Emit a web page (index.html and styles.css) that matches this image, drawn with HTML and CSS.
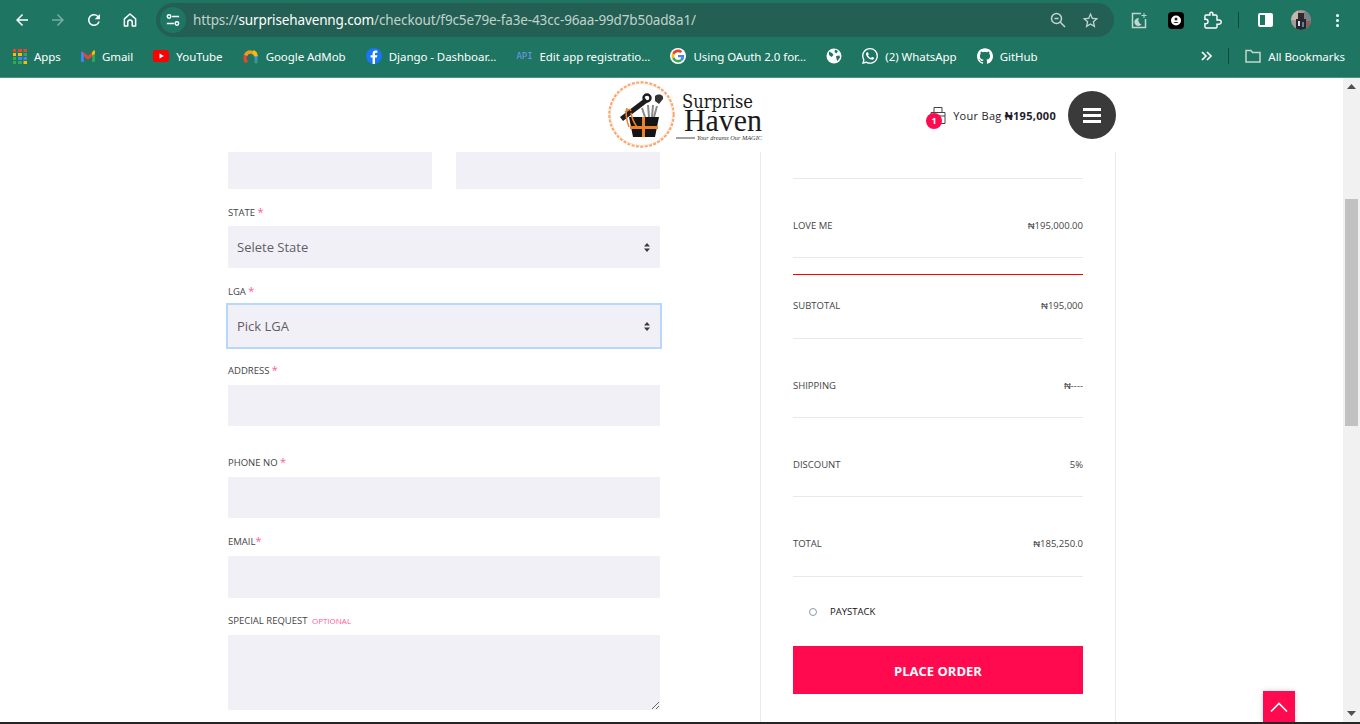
FILE: index.html
```html
<!DOCTYPE html>
<html lang="en">

<head>
  <meta charset="UTF-8">
  <title>Checkout - Surprise Haven</title>
  <link rel="stylesheet" href="styles.css">
</head>

<body>
  <div class="toolbar">
    <button class="nav-btn"><svg viewBox="0 0 24 24" width="18" height="18"><path d="M20 11H7.830l5.590-5.590L12 4l-8 8 8 8 1.410-1.410L7.830 13H20v-2z"/></svg></button>
    <button class="nav-btn nav-off"><svg viewBox="0 0 24 24" width="18" height="18"><path d="M4 11h12.170l-5.590-5.590L12 4l8 8-8 8-1.410-1.410L16.170 13H4v-2z"/></svg></button>
    <button class="nav-btn"><svg viewBox="0 0 24 24" width="18" height="18"><path d="M17.650 6.350A7.958 7.958 0 0 0 12 4c-4.420 0-7.990 3.580-7.990 8s3.570 8 7.990 8c3.730 0 6.840-2.550 7.730-6h-2.080A5.990 5.990 0 0 1 12 18c-3.310 0-6-2.690-6-6s2.690-6 6-6c1.660 0 3.140.690 4.220 1.780L13 11h7V4l-2.350 2.350z"/></svg></button>
    <button class="nav-btn"><svg viewBox="0 0 24 24" width="18" height="18"><path class="line" d="M4.500 10.500 12 4l7.500 6.500V20H15v-5a3 3 0 0 0-6 0v5H4.500z"/></svg></button>

    <div class="omnibox">
      <span class="site-info"><svg viewBox="0 0 16 16" width="14" height="14"><path class="line" d="M7 4h8M1 12h8"/><circle class="line" cx="3.500" cy="4" r="2"/><circle class="line" cx="12.500" cy="12" r="2"/></svg></span>
      <span class="url"><span class="url-dim">https://</span>surprisehavenng.com<span class="url-dim">/checkout/f9c5e79e-fa3e-43cc-96aa-99d7b50ad8a1/</span></span>
      <span class="omni-icons">
        <svg viewBox="0 0 18 18" width="18" height="18"><circle class="line-dim" cx="7.500" cy="7.500" r="5"/><path class="line-dim" d="M11.300 11.300 16 16M5.500 7.500h4"/></svg>
        <svg viewBox="0 0 24 24" width="19" height="19"><path class="dim" d="M22 9.240l-7.190-.62L12 2 9.190 8.630 2 9.240l5.460 4.730L5.820 21 12 17.270 18.180 21l-1.630-7.030L22 9.240zM12 15.400l-3.760 2.270 1-4.280-3.320-2.880 4.380-.38L12 6.100l1.710 4.040 4.380.38-3.320 2.880 1 4.280L12 15.400z"/></svg>
      </span>
    </div>

    <div class="ext-icons">
      <svg class="ext-moon" viewBox="0 0 16 17" width="16" height="17"><path class="line-dim" d="M10 1.500H1.500v14h13V7"/><path class="dim" d="M8 6a4 4 0 1 0 2.500 6.500A4.500 4.500 0 0 1 8 6z"/><path class="dim" d="M12.500 1h1v2h2v1h-2v2h-1V4h-2V3h2z"/></svg>
      <svg class="ext-black" viewBox="0 0 16 17" width="16" height="17"><rect width="16" height="17" rx="4" fill="#000"/><circle cx="8" cy="8.500" r="5" fill="#fff"/><circle cx="8" cy="7" r="1.500" fill="#222"/><path d="M5.500 11c.4-1.500 4.600-1.500 5 0z" fill="#222"/></svg>
      <svg class="ext-puzzle" viewBox="0 0 24 24" width="20" height="20"><path class="line" d="M20.500 12H18V7.500a1.500 1.500 0 0 0-1.500-1.500H13V3.500a2.500 2.500 0 0 0-3.500 0V6H5a1.500 1.500 0 0 0-1.500 1.500V11h1a2.500 2.500 0 0 1 0 5.500h-1V20A1.500 1.500 0 0 0 5 21.500h11.500A1.500 1.500 0 0 0 18 20v-3h2.500a2.500 2.500 0 0 0 0-5z"/></svg>
      <span class="divider"></span>
      <span class="panel-icon"><span></span></span>
      <svg class="avatar" viewBox="0 0 20 20" width="20" height="20">
        <rect width="20" height="20" fill="#a79a94"/>
        <rect x="0" y="0" width="7" height="10" fill="#c2b6ae"/>
        <rect x="13" y="2" width="7" height="9" fill="#7d7f88"/>
        <rect x="7" y="3" width="6" height="6" fill="#2e2a2a"/>
        <rect x="5" y="9" width="10" height="11" fill="#23262e"/>
        <rect x="7" y="11" width="2" height="5" fill="#d9dde2"/>
        <rect x="11" y="12" width="2" height="5" fill="#5f7fa6"/>
        <rect x="15" y="11" width="5" height="9" fill="#8e5d55"/>
      </svg>
      <span class="menu-dots"><i></i><i></i><i></i></span>
    </div>
  </div>

  <div class="bookmarks">
    <a class="mark"><svg width="14" height="15" viewBox="0 0 14 15"><path fill="#ea4335" d="M0 0h3v3H0zM5 0h4v3H5zM10.500 0H14v3h-3.500z"/><path fill="#fbbc05" d="M0 4h3v3H0zM5 4h4v3H5z"/><path fill="#34a853" d="M10.500 4H14v3h-3.500zM0 8h3v3H0zM0 12h3v3H0zM5 12h4v3H5z"/><path fill="#4285f4" d="M5 8h4v3H5zM10.500 8H14v3h-3.500z"/><path fill="#fbbc05" d="M10.500 12H14v3h-3.500z"/></svg>Apps</a>
    <a class="mark"><svg width="14" height="14" viewBox="0 0 14 14"><path fill="#ea4335" d="M1 2 7 6.800 12 3v4L7 10.500 1 6z"/><path fill="#fbbc05" d="M10.800 3.800 12.500 1.500a1 1 0 0 1 1.500 1V5l-2.500 2z"/><path fill="#4285f4" d="M0 2.500 2.800 4.500V13H1a1 1 0 0 1-1-1z"/><path fill="#34a853" d="M14 5v7a1 1 0 0 1-1 1h-1.800V6.500z"/></svg>Gmail</a>
    <a class="mark"><svg width="16" height="16" viewBox="0 0 16 16"><rect y="2" width="16" height="12" rx="3" fill="#f00"/><path fill="#fff" d="M6.500 5.500 11 8l-4.500 2.500z"/></svg>YouTube</a>
    <a class="mark"><svg width="16" height="16" viewBox="0 0 16 16"><path fill="none" stroke="#ea4335" stroke-width="3.400" d="M3.500 14.500C2 12 1.700 9.500 2.500 7.500"/><path fill="none" stroke="#f29a1f" stroke-width="3.400" d="M2.500 7.500a5.500 5.500 0 0 1 10.500 1"/><path fill="none" stroke="#fbbc05" stroke-width="3.400" d="M10 3.500A5.500 5.500 0 0 1 13 8.500"/><path fill="none" stroke="#4285f4" stroke-width="3" d="M13 8.500V13"/><circle cx="13" cy="14" r="1.600" fill="#34a853"/></svg>Google AdMob</a>
    <a class="mark"><svg width="16" height="16" viewBox="0 0 16 16"><circle cx="8" cy="8" r="8" fill="#1877f2"/><path fill="#fff" d="M9 16V9.500h2l.4-2.300H9V5.900c0-.7.300-1.200 1.200-1.200h1.200V2.700c-.5-.1-1.100-.2-1.800-.2-1.900 0-3 1.100-3 3.100v1.600H4.600v2.300h2V16z"/></svg>Django - Dashboar...</a>
    <a class="mark"><span class="api-badge">API</span>Edit app registratio...</a>
    <a class="mark"><svg width="16" height="16" viewBox="-6 -6 60 60"><circle cx="24" cy="24" r="30" fill="#fff"/><path fill="#EA4335" d="M24 9.500c3.540 0 6.710 1.220 9.210 3.600l6.850-6.850C35.900 2.380 30.470 0 24 0 14.620 0 6.510 5.380 2.560 13.220l7.980 6.190C12.430 13.720 17.740 9.500 24 9.500z"/><path fill="#4285F4" d="M46.980 24.550c0-1.570-.15-3.090-.38-4.550H24v9.020h12.940c-.58 2.960-2.260 5.480-4.780 7.180l7.730 6c4.510-4.180 7.090-10.360 7.090-17.650z"/><path fill="#FBBC05" d="M10.530 28.590c-.48-1.450-.76-2.990-.76-4.590s.27-3.140.76-4.590l-7.980-6.190C.92 16.460 0 20.120 0 24c0 3.880.92 7.540 2.560 10.780l7.970-6.190z"/><path fill="#34A853" d="M24 48c6.480 0 11.930-2.130 15.890-5.810l-7.730-6c-2.150 1.450-4.920 2.300-8.160 2.300-6.260 0-11.570-4.220-13.470-9.910l-7.980 6.190C6.510 42.620 14.620 48 24 48z"/></svg>Using OAuth 2.0 for...</a>
    <a class="mark"><svg width="16" height="16" viewBox="0 0 16 16"><circle cx="8" cy="8" r="7.500" fill="#fff"/><path fill="#1e7562" d="M3 3.500 6 5l1.500 2L5.500 9 3 7zM9 1.500l3 1.500-1.500 2.500L8.500 4zM10 8l3.500-.5.500 2-2.500 3.500-1-2z"/></svg></a>
    <a class="mark"><svg width="16" height="16" viewBox="0 0 24 24"><path fill="#fff" d="M17.472 14.382c-.297-.149-1.758-.867-2.030-.967-.273-.099-.471-.148-.670.150-.197.297-.767.966-.940 1.164-.173.199-.347.223-.644.075-.297-.150-1.255-.463-2.390-1.475-.883-.788-1.480-1.761-1.653-2.059-.173-.297-.018-.458.130-.606.134-.133.298-.347.446-.520.149-.174.198-.298.298-.497.099-.198.050-.371-.025-.520-.075-.149-.669-1.612-.916-2.207-.242-.579-.487-.500-.669-.510-.173-.008-.371-.010-.570-.010-.198 0-.520.074-.792.372-.272.297-1.040 1.016-1.040 2.479 0 1.462 1.065 2.875 1.213 3.074.149.198 2.096 3.200 5.077 4.487.709.306 1.262.489 1.694.625.712.227 1.360.195 1.871.118.571-.085 1.758-.719 2.006-1.413.248-.694.248-1.289.173-1.413-.074-.124-.272-.198-.570-.347m-5.421 7.403h-.004a9.870 9.870 0 0 1-5.031-1.378l-.361-.214-3.741.982.998-3.648-.235-.374a9.860 9.860 0 0 1-1.510-5.260c.001-5.450 4.436-9.884 9.888-9.884 2.640 0 5.122 1.030 6.988 2.898a9.825 9.825 0 0 1 2.893 6.994c-.003 5.450-4.437 9.884-9.885 9.884m8.413-18.297A11.815 11.815 0 0 0 12.050 0C5.495 0 .160 5.335.157 11.892c0 2.096.547 4.142 1.588 5.945L.057 24l6.305-1.654a11.882 11.882 0 0 0 5.683 1.448h.005c6.554 0 11.890-5.335 11.893-11.893a11.821 11.821 0 0 0-3.480-8.413z"/></svg>(2) WhatsApp</a>
    <a class="mark"><svg width="16" height="16" viewBox="0 0 24 24"><path fill="#fff" d="M12 .297c-6.630 0-12 5.373-12 12 0 5.303 3.438 9.800 8.205 11.385.6.113.82-.258.82-.577 0-.285-.010-1.040-.015-2.040-3.338.724-4.042-1.610-4.042-1.610C4.422 18.070 3.633 17.700 3.633 17.700c-1.087-.744.084-.729.084-.729 1.205.084 1.838 1.236 1.838 1.236 1.070 1.835 2.809 1.305 3.495.998.108-.776.417-1.305.760-1.605-2.665-.3-5.466-1.332-5.466-5.930 0-1.310.465-2.380 1.235-3.220-.135-.303-.54-1.523.105-3.176 0 0 1.005-.322 3.300 1.230.960-.267 1.980-.399 3-.405 1.020.006 2.040.138 3 .405 2.280-1.552 3.285-1.230 3.285-1.230.645 1.653.24 2.873.12 3.176.765.840 1.230 1.910 1.230 3.220 0 4.610-2.805 5.625-5.475 5.920.420.360.810 1.096.810 2.220 0 1.606-.015 2.896-.015 3.286 0 .315.210.690.825.570C20.565 22.092 24 17.592 24 12.297c0-6.627-5.373-12-12-12"/></svg>GitHub</a>
    <span class="mark-end">
      <svg width="12" height="12" viewBox="0 0 12 12"><path class="line" d="M2 2l4 4-4 4M7 2l4 4-4 4"/></svg>
      <span class="divider"></span>
      <span class="mark"><svg width="16" height="14" viewBox="0 0 16 14"><path class="line-dim" d="M1 1.500h5l1.500 2H15v9.500H1z"/></svg>All Bookmarks</span>
    </span>
  </div>

  <div class="viewport">
    <div class="page">
      <header class="site-header">
        <svg class="logo" width="170" height="74" viewBox="0 0 170 74">
          <circle cx="41.500" cy="36.500" r="32" fill="none" stroke="#f9a66c" stroke-width="2.400" stroke-dasharray="3 1.400"/>
          <circle cx="41.500" cy="36.500" r="31" fill="#fff"/>
          <circle cx="41.500" cy="36.500" r="31" fill="none" stroke="#fcd3b6" stroke-width=".8"/>
          <path d="M20 39 45 20l3 4-25 19z" fill="#1c1c1c"/>
          <circle cx="47" cy="20" r="3.500" fill="none" stroke="#1c1c1c" stroke-width="2.400"/>
          <path d="M55 18c4-3 9-1 8 3l-4 5-4-3z" fill="#333"/>
          <path d="M42 30l3 9M48 27l1 12M53 27l-1 12M57 28l-3 11" stroke="#8a8a8a" stroke-width="2"/>
          <path d="M29 39h30l-4 20H33z" fill="#141414"/>
          <path d="M30 48h28v3H30zM42 39h3v20h-3z" fill="#f07f2a"/>
          <path d="M27 30c-2 5 0 14 2 19M31 35c1 5 3 10 6 14M25 34c3-2 5-4 6-1" fill="none" stroke="#f07f2a" stroke-width="1.500"/>
          <text class="logo-top" x="82" y="30" textLength="71" lengthAdjust="spacingAndGlyphs">Surprise</text>
          <text class="logo-main" x="84" y="53" textLength="78" lengthAdjust="spacingAndGlyphs">Haven</text>
          <path d="M76 60h19" stroke="#444" stroke-width="1"/>
          <text class="logo-tag" x="97" y="62" textLength="65" lengthAdjust="spacingAndGlyphs">Your dreams Our MAGIC</text>
        </svg>
        <div class="bag">
          <span class="bag-icon">
            <svg width="16" height="18" viewBox="0 0 16 18"><path d="M1 6.500h14v11H1zM4 6.500V1.500h8v5M1 10h14" fill="none" stroke="#444" stroke-width="1"/></svg>
            <span class="bag-count">1</span>
          </span>
          <span class="bag-text">Your Bag <b>₦195,000</b></span>
        </div>
        <button class="menu-btn"><span></span><span></span><span></span></button>
      </header>

      <main class="content">
        <form class="checkout-form">
          <div class="name-row">
            <input class="input input-short" type="text">
            <input class="input input-short" type="text">
          </div>

          <div class="field field-tight">
            <label class="label">STATE <em>*</em></label>
            <div class="select">
              <span>Selete State</span>
              <svg width="6" height="9" viewBox="0 0 6 9"><path d="M3 0l3 3.500H0zM3 9 0 5.500h6z"/></svg>
            </div>
          </div>

          <div class="field field-tight">
            <label class="label">LGA <em>*</em></label>
            <div class="select select-focus">
              <span>Pick LGA</span>
              <svg width="6" height="9" viewBox="0 0 6 9"><path d="M3 0l3 3.500H0zM3 9 0 5.500h6z"/></svg>
            </div>
          </div>

          <div class="field">
            <label class="label">ADDRESS <em>*</em></label>
            <input class="input input-thin" type="text">
          </div>

          <div class="field field-wide">
            <label class="label">PHONE NO <em>*</em></label>
            <input class="input input-thin" type="text">
          </div>

          <div class="field">
            <label class="label">EMAIL<em>*</em></label>
            <input class="input" type="text">
          </div>

          <div class="field field-tight">
            <label class="label">SPECIAL REQUEST <small>OPTIONAL</small></label>
            <textarea class="input textarea"></textarea>
          </div>
        </form>

        <aside class="summary">
          <div class="summary-top"></div>
          <div class="summary-row"><span>LOVE ME</span><span>₦195,000.00</span></div>
          <div class="summary-red"></div>
          <div class="summary-row summary-first"><span>SUBTOTAL</span><span>₦195,000</span></div>
          <div class="summary-row"><span>SHIPPING</span><span>₦----</span></div>
          <div class="summary-row"><span>DISCOUNT</span><span>5%</span></div>
          <div class="summary-row summary-last"><span>TOTAL</span><span>₦185,250.0</span></div>
          <label class="pay-option"><span class="radio"></span>PAYSTACK</label>
          <button class="place-order" type="button">PLACE ORDER</button>
        </aside>
      </main>

      <a class="to-top"><svg width="18" height="10" viewBox="0 0 18 10"><path d="M1 9.500 9 1.500l8 8" fill="none" stroke="#fff" stroke-width="1.600"/></svg></a>
    </div>

    <div class="scrollbar">
      <svg class="scroll-arrow" width="9" height="5" viewBox="0 0 9 5"><path d="M4.500 0 9 5H0z"/></svg>
      <div class="scroll-track"><div class="scroll-thumb"></div></div>
      <svg class="scroll-arrow" width="9" height="5" viewBox="0 0 9 5"><path d="M0 0h9L4.500 5z"/></svg>
    </div>
  </div>
  <div class="bottom-edge"></div>
</body>

</html>
```

FILE: styles.css
```css
* {
  margin: 0;
  padding: 0;
  box-sizing: border-box;
}

html,
body {
  width: 100%;
  height: 100%;
  overflow: hidden;
}

body {
  display: flex;
  flex-direction: column;
  background: #fff;
  font-family: 'Open Sans', sans-serif;
}

/* browser chrome */

.toolbar {
  height: 38px;
  flex: none;
  display: flex;
  align-items: center;
  padding: 2px 0 0 4px;
  background: #1e7562;
}

.nav-btn {
  width: 36px;
  height: 36px;
  flex: none;
  display: flex;
  align-items: center;
  justify-content: center;
  background: transparent;
  border: 0;
}

.line {
  fill: none;
  stroke: #fff;
  stroke-width: 1.700;
}

.nav-btn svg path {
  fill: #fff;
}

.nav-btn svg path.line {
  fill: none;
  stroke-width: 2;
  stroke-linejoin: round;
}

.nav-off svg path {
  fill: #79ada0;
}

.line-dim {
  fill: none;
  stroke: #c3d5d0;
  stroke-width: 1.500;
}

.dim {
  fill: #c3d5d0;
}

.omnibox {
  width: 958px;
  height: 34px;
  margin-left: 8px;
  flex: none;
  display: flex;
  align-items: center;
  padding: 0 14px 0 4px;
  border-radius: 17px;
  background: #245f53;
}

.site-info {
  width: 26px;
  height: 26px;
  flex: none;
  display: flex;
  align-items: center;
  justify-content: center;
  border-radius: 50%;
  background: #1e7562;
}

.url {
  margin-left: 7px;
  font-family: 'Noto Sans', sans-serif;
  font-size: 13.500px;
  letter-spacing: -.13px;
  color: #fff;
  white-space: nowrap;
}

.url-dim {
  color: #c0d2cd;
}

.omni-icons {
  margin-left: auto;
  display: flex;
  align-items: center;
  gap: 14px;
}

.ext-icons {
  flex: 1;
  display: flex;
  align-items: center;
  padding-left: 17px;
}

.ext-black {
  margin-left: 21px;
}

.ext-puzzle {
  margin-left: 18px;
}

.divider {
  width: 1px;
  height: 16px;
  background: #0d4a3e;
}

.ext-icons .divider {
  margin-left: 16px;
}

.panel-icon {
  width: 15px;
  height: 14px;
  margin-left: 19px;
  border: 2px solid #fff;
  border-radius: 2px;
  background: #fff;
  display: block;
}

.panel-icon span {
  display: block;
  width: 5px;
  height: 10px;
  background: #1e7562;
}

.avatar {
  margin-left: 18px;
  border-radius: 50%;
}

.menu-dots {
  margin-left: 25px;
  display: flex;
  flex-direction: column;
  gap: 2px;
}

.menu-dots i {
  width: 3px;
  height: 3px;
  border-radius: 50%;
  background: #fff;
}

.bookmarks {
  height: 40px;
  flex: none;
  display: flex;
  align-items: center;
  gap: 20.200px;
  padding: 0 15px 3px 13px;
  background: #1e7562;
  border-bottom: 1px solid #4f917f;
  font-family: 'Noto Sans', sans-serif;
  font-size: 11.500px;
  letter-spacing: -.06px;
  color: #fff;
  white-space: nowrap;
}

.mark {
  display: flex;
  align-items: center;
  gap: 7px;
}

.api-badge {
  width: 16px;
  font-family: 'DejaVu Sans Mono', monospace;
  font-size: 9px;
  color: #6f9bec;
}

.mark-end {
  margin-left: auto;
  display: flex;
  align-items: center;
  gap: 16px;
}

/* page */

.viewport {
  flex: 1;
  min-height: 0;
  display: flex;
}

.page {
  flex: 1;
  position: relative;
  overflow: hidden;
}

.site-header {
  height: 74px;
  display: flex;
  align-items: center;
  padding: 0 227px 0 600px;
  background: #fff;
}

.logo {
  flex: none;
}

.logo-top {
  font-family: 'DejaVu Serif', serif;
  font-size: 18px;
  fill: #1a1a1a;
}

.logo-main {
  font-family: 'Liberation Serif', serif;
  font-size: 31px;
  fill: #1a1a1a;
}

.logo-tag {
  font-family: 'Liberation Serif', serif;
  font-size: 6px;
  font-style: italic;
  fill: #333;
}

.bag {
  margin-left: auto;
  display: flex;
  align-items: center;
}

.bag-icon {
  position: relative;
  width: 16px;
  height: 18px;
  margin-right: 7px;
}

.bag-count {
  position: absolute;
  left: -4px;
  top: 7px;
  width: 16px;
  height: 16px;
  border-radius: 50%;
  background: #ff0a4f;
  color: #fff;
  font-size: 9px;
  font-weight: 700;
  line-height: 16px;
  text-align: center;
}

.bag-text {
  font-size: 11px;
  letter-spacing: .3px;
  color: #1f1d2b;
}

.menu-btn {
  width: 48px;
  height: 48px;
  margin-left: 12px;
  display: flex;
  flex-direction: column;
  align-items: center;
  justify-content: center;
  gap: 3px;
  border: 0;
  border-radius: 50%;
  background: #3a3a3a;
}

.menu-btn span {
  width: 18px;
  height: 3px;
  background: #fff;
}

.content {
  display: flex;
  padding-left: 228px;
}

.checkout-form {
  width: 432px;
  flex: none;
}

.name-row {
  display: flex;
  gap: 24px;
}

.input {
  display: block;
  width: 100%;
  height: 42px;
  border: 0;
  border-radius: 0;
  background: #f2f0f7;
}

.input-short {
  height: 37px;
}

.input-thin {
  height: 41px;
}

.textarea {
  height: 75px;
}

.field {
  margin-top: 15px;
}

.field-wide {
  margin-top: 28px;
}

.label {
  display: block;
  height: 15px;
  margin-bottom: 8px;
  font-size: 9.500px;
  line-height: 15px;
  color: #444;
}

.field-tight .label {
  margin-bottom: 7px;
}

.label em {
  font-style: normal;
  font-size: 11px;
  color: #ff5c8e;
}

.label small {
  margin-left: 2px;
  font-size: 8px;
  color: #ff5c95;
}

.select {
  height: 42px;
  display: flex;
  align-items: center;
  justify-content: space-between;
  padding: 0 10px 0 9px;
  background: #f2f0f7;
  font-size: 13px;
  color: #5f5e66;
}

.select svg {
  fill: #343a40;
}

.select-focus {
  box-shadow: 0 0 0 2px #b8d8fb;
}

.summary {
  width: 356px;
  margin-left: 100px;
  flex: none;
  padding: 0 32px;
  border-left: 1px solid #e9e9e9;
  border-right: 1px solid #e9e9e9;
  height: 570px;
}

.summary-top {
  height: 27px;
  border-bottom: 1px solid #e9e9e9;
}

.summary-row {
  display: flex;
  justify-content: space-between;
  padding: 39px 0 24px;
  border-bottom: 1px solid #e9e9e9;
  font-size: 9.500px;
  line-height: 15px;
  color: #444;
}

.summary-red {
  height: 1px;
  margin-top: 16px;
  background: #f00;
}

.summary-first {
  padding: 23px 0 25px;
}

.summary-last {
  padding-bottom: 25px;
}

.pay-option {
  display: flex;
  align-items: center;
  margin-top: 27px;
  padding-left: 16px;
  font-size: 9.500px;
  line-height: 15px;
  color: #111;
}

.radio {
  width: 8px;
  height: 8px;
  margin-right: 13px;
  border: 1.500px solid #8d9aa5;
  border-radius: 50%;
}

.place-order {
  display: block;
  width: 100%;
  height: 48px;
  margin-top: 27px;
  padding-top: 2px;
  border: 0;
  background: #ff0a4f;
  color: #fff;
  font-family: 'Open Sans', sans-serif;
  font-size: 13px;
  font-weight: 700;
}

.to-top {
  position: absolute;
  right: 48px;
  bottom: 0;
  width: 32px;
  height: 31px;
  display: flex;
  align-items: center;
  justify-content: center;
  background: #ff0a4f;
  box-shadow: 0 0 6px rgba(0, 0, 0, .15);
}

.scrollbar {
  width: 17px;
  flex: none;
  display: flex;
  flex-direction: column;
  align-items: center;
  background: #f1f1f1;
}

.scroll-arrow {
  flex: none;
  margin: 6px 0;
  fill: #505050;
}

.scroll-track {
  flex: 1;
  width: 100%;
  padding-top: 104px;
}

.scroll-thumb {
  width: 13px;
  height: 227px;
  margin: 0 auto;
  background: #c1c1c1;
}

.bottom-edge {
  height: 2px;
  flex: none;
  background: #262626;
}
```
